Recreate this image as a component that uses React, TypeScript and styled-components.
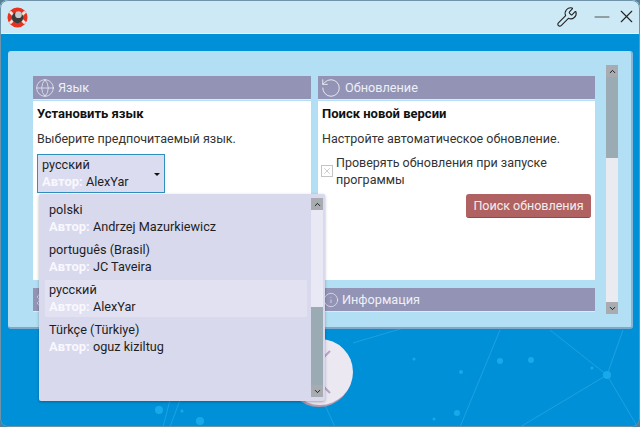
import React from "react";
import styled, { createGlobalStyle } from "styled-components";
import { Wrench, Minus, X, Globe, RotateCcw, Info, Settings, ChevronUp, ChevronDown } from "lucide-react";

const languages = [
  { name: "polski", author: "Andrzej Mazurkiewicz" },
  { name: "português (Brasil)", author: "JC Taveira" },
  { name: "русский", author: "AlexYar", active: true },
  { name: "Türkçe (Türkiye)", author: "oguz kiziltug" },
];

const App = () => {
  return (
    <>
      <GlobalStyle />
      <Window>
        <Backdrop viewBox="0 0 640 427">
          <g stroke="#2ba6e2" strokeWidth="1" fill="none" opacity="0.75">
            <path d="M607 375L550 330M607 375L623 330M607 375L520 427M607 375L637 426" />
            <path d="M500 330L460 427M353 343L420 323" />
            <path d="M170 400L163 427M180 400L170 427M325 405L335 427" />
          </g>
          <g fill="#18a9ea">
            <circle cx="607" cy="375" r="4" />
            <circle cx="500" cy="361" r="3" />
            <circle cx="531" cy="360" r="3" />
            <circle cx="457" cy="413" r="3" />
            <circle cx="461" cy="372" r="2" />
            <circle cx="592" cy="368" r="1.5" />
            <circle cx="414" cy="359" r="1.5" />
            <circle cx="434" cy="419" r="1.5" />
            <circle cx="159" cy="410" r="4" />
            <circle cx="182" cy="411" r="1.5" />
            <circle cx="200" cy="421" r="4" />
          </g>
        </Backdrop>
        <TitleBar>
          <Logo viewBox="0 0 22 22">
            <circle cx="11" cy="11" r="8" fill="none" stroke="#e8321f" strokeWidth="5" />
            <path d="M3 5L7 9M19 5L15 9M3 17L7 13M19 17L15 13" stroke="#f3e6dc" strokeWidth="3" />
            <circle cx="11" cy="11" r="6" fill="#3b3b3b" />
            <circle cx="12" cy="8" r="3.5" fill="#c9c9c9" />
          </Logo>
          <Controls>
            <ToolIcon size={22} strokeWidth={1.2} />
            <Minus size={24} strokeWidth={1} color="#555" />
            <X size={21} strokeWidth={1.3} />
          </Controls>
        </TitleBar>
        <Panel>
          <Cards>
            <Card>
              <CardHeader>
                <Globe size={20} strokeWidth={0.9} />
                Язык
              </CardHeader>
              <CardBody>
                <CardTitle>Установить язык</CardTitle>
                <Hint>Выберите предпочитаемый язык.</Hint>
                <Combo>
                  <div>
                    <LangName>русский</LangName>
                    <AuthorLine>
                      <AuthorLabel>Автор:</AuthorLabel> AlexYar
                    </AuthorLine>
                  </div>
                  <Caret />
                </Combo>
              </CardBody>
            </Card>
            <Card>
              <CardHeader>
                <RotateCcw size={22} strokeWidth={1} />
                Обновление
              </CardHeader>
              <CardBody>
                <CardTitle>Поиск новой версии</CardTitle>
                <Hint>Настройте автоматическое обновление.</Hint>
                <CheckRow>
                  <CheckBox>
                    <X size={10} strokeWidth={1.4} color="#aaa" />
                  </CheckBox>
                  <span>Проверять обновления при запуске программы</span>
                </CheckRow>
                <ButtonRow>
                  <UpdateButton>Поиск обновления</UpdateButton>
                </ButtonRow>
              </CardBody>
            </Card>
            <Card>
              <CardHeader>
                <Settings size={20} strokeWidth={0.9} />
              </CardHeader>
            </Card>
            <Card>
              <CardHeader>
                <InfoIcon size={16} strokeWidth={1} />
                Информация
              </CardHeader>
            </Card>
          </Cards>
          <Scrollbar>
            <ScrollArrow>
              <ChevronUp size={9} strokeWidth={2.4} />
            </ScrollArrow>
            <ScrollThumb $size={81} />
            <ScrollTrack />
            <ScrollArrow>
              <ChevronDown size={9} strokeWidth={2.4} />
            </ScrollArrow>
          </Scrollbar>
        </Panel>
        <RoundButton>
          <svg width="66" height="66" viewBox="0 0 66 66">
            <path d="M22 33L43 12M22 33L43 54" stroke="#b6a3c4" strokeWidth="2" fill="none" />
          </svg>
        </RoundButton>
        <Popup>
          <PopupList>
            {languages.map((lang) => (
              <PopupItem key={lang.name} $active={lang.active}>
                <LangName>{lang.name}</LangName>
                <AuthorLine>
                  <AuthorLabel>Автор:</AuthorLabel> {lang.author}
                </AuthorLine>
              </PopupItem>
            ))}
          </PopupList>
          <PopupScrollbar>
            <ScrollArrow>
              <ChevronUp size={9} strokeWidth={2.4} />
            </ScrollArrow>
            <PopupTrack />
            <ScrollThumb $size={78} />
            <ScrollArrow>
              <ChevronDown size={9} strokeWidth={2.4} />
            </ScrollArrow>
          </PopupScrollbar>
        </Popup>
      </Window>
    </>
  );
};

export default App;

const GlobalStyle = createGlobalStyle`
  html, body {
    margin: 0;
    padding: 0;
    overflow: hidden;
    background: #5a7f93;
  }
  body {
    font-family: Roboto, "Open Sans", sans-serif;
    font-size: 12.5px;
    color: #1e1e1e;
  }
`;

const Window = styled.div`
  position: relative;
  width: 640px;
  height: 427px;
  box-sizing: border-box;
  background: #0090d8;
  border-radius: 8px;
  overflow: hidden;

  &::after {
    content: "";
    position: absolute;
    inset: 0;
    border: 1px solid #6f93a8;
    border-radius: 8px;
    pointer-events: none;
  }
`;

const Backdrop = styled.svg`
  position: absolute;
  inset: 0;
  width: 640px;
  height: 427px;
`;

const TitleBar = styled.div`
  position: relative;
  height: 33px;
  border-bottom: 1px solid #e4f3fa;
  background: #cde9f6;
  display: flex;
  align-items: center;
  justify-content: space-between;
  padding: 0 3px 0 7px;
`;

const Logo = styled.svg`
  width: 21px;
  height: 21px;
  margin-top: 1px;
`;

const Controls = styled.div`
  display: flex;
  align-items: center;
  gap: 2px;
  color: #222;
`;

const ToolIcon = styled(Wrench)`
  margin-right: 10px;
`;

const InfoIcon = styled(Info)`
  margin-left: 3px;
`;

const Panel = styled.div`
  position: relative;
  display: flex;
  align-items: flex-start;
  width: 625px;
  height: 278px;
  box-sizing: border-box;
  margin: 17px 0 0 8px;
  padding: 14px 0 0 25px;
  background: #b2dff3;
  border-radius: 3px;
  border-right: 2px solid #8ab5d6;
  border-bottom: 2px solid #7fa9cb;
  overflow: hidden;
`;

const Cards = styled.div`
  display: grid;
  grid-template-columns: 278px 277px;
  grid-template-rows: 204px 25px;
  column-gap: 7px;
  row-gap: 8px;
  margin-top: 11px;
`;

const Card = styled.div`
  display: flex;
  flex-direction: column;
`;

const CardHeader = styled.div`
  display: flex;
  align-items: center;
  gap: 3px;
  height: 23px;
  flex-shrink: 0;
  padding-left: 2px;
  background: #9393b5;
  border-bottom: 1px solid #dfeaf4;
  color: #eef0f7;
  font-size: 12.7px;
`;

const CardBody = styled.div`
  flex: 1;
  margin-top: 1px;
  padding: 4px 4px;
  background: #fff;
`;

const CardTitle = styled.div`
  font-weight: 700;
  font-size: 13px;
  color: #111;
  line-height: 17px;
`;

const Hint = styled.div`
  margin-top: 8px;
  line-height: 17px;
  color: #333;
`;

const Combo = styled.div`
  display: flex;
  align-items: center;
  justify-content: space-between;
  width: 128px;
  height: 39px;
  box-sizing: border-box;
  margin-top: 7px;
  padding: 0 4px 0 4px;
  background: #dcdcf0;
  border: 1px solid #2f8fbf;
`;

const LangName = styled.div`
  font-size: 12.7px;
  line-height: 17px;
`;

const AuthorLine = styled.div`
  font-size: 12.7px;
  line-height: 18px;
`;

const AuthorLabel = styled.span`
  font-weight: 700;
  font-size: 13px;
  color: #f8f8fe;
`;

const Caret = styled.span`
  width: 0;
  height: 0;
  margin-top: 1px;
  border-left: 3px solid transparent;
  border-right: 3px solid transparent;
  border-top: 3px solid #111;
`;

const CheckRow = styled.div`
  display: flex;
  align-items: center;
  margin-top: 7px;
  line-height: 17px;
  color: #333;
  width: 240px;
`;

const CheckBox = styled.span`
  display: inline-flex;
  align-items: center;
  justify-content: center;
  flex-shrink: 0;
  width: 10px;
  height: 10px;
  margin: 0 3px 0 -1px;
  border: 1px solid #c4c4c4;
`;

const ButtonRow = styled.div`
  display: flex;
  justify-content: flex-end;
  margin-top: 6px;
`;

const UpdateButton = styled.button`
  width: 125px;
  height: 24px;
  padding: 0;
  border: none;
  border-bottom: 1px solid #93484a;
  border-radius: 3px;
  background: #b06162;
  color: #f4eeee;
  font: inherit;
`;

const Scrollbar = styled.div`
  position: absolute;
  left: 598px;
  top: 14px;
  width: 12px;
  height: 249px;
  display: flex;
  flex-direction: column;
  background: #eaebf0;
`;

const ScrollArrow = styled.div`
  display: flex;
  align-items: center;
  justify-content: center;
  height: 12px;
  flex-shrink: 0;
  background: #a8acb0;
  color: #111;
`;

const ScrollThumb = styled.div<{ $size: number }>`
  height: ${(p) => p.$size}px;
  flex-shrink: 0;
  background: #9aabb3;
`;

const ScrollTrack = styled.div`
  flex: 1;
`;

const RoundButton = styled.div`
  position: absolute;
  left: 287px;
  top: 339px;
  width: 66px;
  height: 66px;
  border-radius: 50%;
  background: #ece8f2;
  box-shadow: -1px 2px 0 #b498ad;
`;

const Popup = styled.div`
  position: absolute;
  left: 39px;
  top: 194px;
  width: 286px;
  height: 207px;
  display: flex;
  background: #d9d9ee;
  border-radius: 2px;
  box-shadow: 0 1px 3px rgba(0, 0, 0, 0.3);
`;

const PopupList = styled.div`
  width: 272px;
  padding: 6px 4px 0 6px;
  box-sizing: border-box;
`;

const PopupItem = styled.div<{ $active?: boolean }>`
  height: 37px;
  margin-bottom: 3px;
  box-sizing: border-box;
  padding: 1px 4px 0 4px;
  background: ${(p) => (p.$active ? "#e1e1f2" : "transparent")};
`;

const PopupScrollbar = styled.div`
  display: flex;
  flex-direction: column;
  width: 12px;
  height: 199px;
  margin-top: 4px;
`;

const PopupTrack = styled.div`
  flex: 1;
  background: #e9e9f5;
`;
